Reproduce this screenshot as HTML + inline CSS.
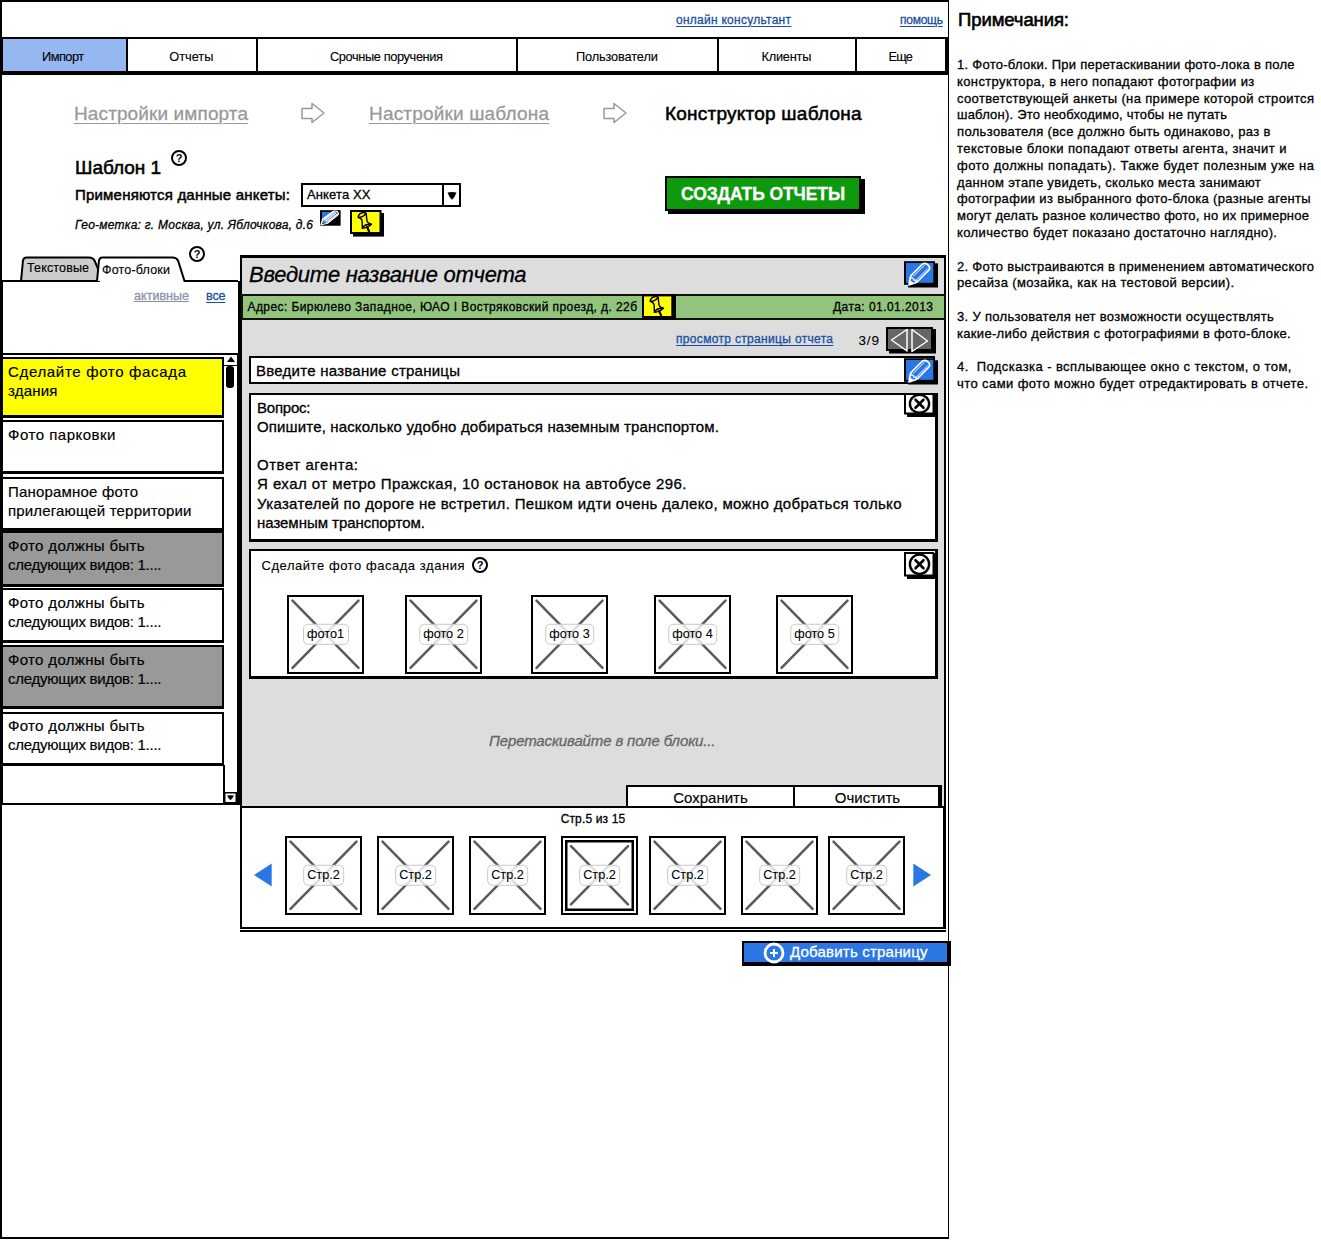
<!DOCTYPE html>
<html lang="ru"><head><meta charset="utf-8"><title>Конструктор шаблона</title>
<style>
*{box-sizing:border-box;margin:0;padding:0}
html,body{width:1321px;height:1241px;background:#fff;overflow:hidden}
body{font-family:"Liberation Sans","DejaVu Sans",sans-serif;color:#000;position:relative;font-size:13px;-webkit-text-stroke:0.300px currentColor}
.a{position:absolute}
.b{position:absolute;border:2px solid #000;background:#fff}
.t{position:absolute;white-space:nowrap;line-height:1}
.lnk{color:#1a4fa0;text-decoration:underline;text-decoration-thickness:1px;text-underline-offset:2px}
.bc{text-decoration:underline;text-decoration-thickness:1px;text-underline-offset:3px}
svg{position:absolute;overflow:visible}

.mi{font-size:12.800px;-webkit-text-stroke:0.120px;margin-left:-0.700px}
.li{position:absolute;left:0.500px;width:223px;border:2px solid #000;border-bottom-width:3px;background:#fff;font-size:15px;line-height:19px;padding:4px 0 0 5.500px;white-space:nowrap;-webkit-text-stroke:0.180px}
.ph{position:absolute;width:77px;height:78.500px;border:2px solid #000;background:#fff}
.ph svg{left:0;top:0;width:100%;height:100%}
.ph span{position:absolute;left:50%;top:50%;transform:translate(-50%,-50%);background:rgba(255,255,255,.8);border:1px solid #c8c8c8;border-radius:5px;padding:1.500px 3.500px 3px;font-size:12.700px;line-height:14px;white-space:nowrap;-webkit-text-stroke:0.080px}
.ph.sel{box-shadow:inset 0 0 0 2px #fff, inset 0 0 0 4.500px #000}
</style></head><body>
<!-- outer frame -->
<div class="a" style="left:0;top:0;width:949px;height:1239.300px;border:2px solid #000;border-right-width:1.5px;border-left-width:2.5px"></div>

<!-- top links -->
<div class="t lnk" style="letter-spacing:0.262px;left:676px;top:13.5px;font-size:12px">онлайн консультант</div>
<div class="t lnk" style="letter-spacing:-0.247px;left:900px;top:13.5px;font-size:12px">помощь</div>

<!-- menu bar -->
<div class="a" style="left:1px;top:37px;width:947.500px;height:38px;border:2px solid #000;border-bottom-width:4px;border-right-width:4px;background:#fff"></div>
<div class="a" style="left:2.500px;top:39px;width:124px;height:32px;background:#95b8f0"></div>
<div class="a" style="left:126px;top:39px;width:2px;height:32px;background:#000"></div>
<div class="a" style="left:256px;top:39px;width:2px;height:32px;background:#000"></div>
<div class="a" style="left:516px;top:39px;width:2px;height:32px;background:#000"></div>
<div class="a" style="left:717px;top:39px;width:2px;height:32px;background:#000"></div>
<div class="a" style="left:855px;top:39px;width:2px;height:32px;background:#000"></div>
<div class="t mi" style="left:1.500px;width:124px;top:50.500px;text-align:center"><span style="letter-spacing:-0.55px">Импорт</span></div>
<div class="t mi" style="left:128px;width:128px;top:50.500px;text-align:center"><span style="letter-spacing:-0.047px">Отчеты</span></div>
<div class="t mi" style="left:258px;width:258px;top:50.500px;text-align:center"><span style="letter-spacing:-0.385px">Срочные поручения</span></div>
<div class="t mi" style="left:518px;width:199px;top:50.500px;text-align:center"><span style="letter-spacing:-0.139px">Пользователи</span></div>
<div class="t mi" style="left:719px;width:136px;top:50.500px;text-align:center"><span style="letter-spacing:-0.219px">Клиенты</span></div>
<div class="t mi" style="left:857px;width:88px;top:50.500px;text-align:center"><span style="letter-spacing:-0.773px">Еще</span></div>

<!-- breadcrumbs -->
<div class="t bc" style="letter-spacing:0.113px;left:74px;top:104px;font-size:19px;color:#999">Настройки импорта</div>
<div class="t bc" style="letter-spacing:0.174px;left:369px;top:104px;font-size:19px;color:#999">Настройки шаблона</div>
<div class="t" style="letter-spacing:0.229px;left:665px;top:104px;font-size:19px;color:#000;-webkit-text-stroke:0.550px">Конструктор шаблона</div>

<!-- template header -->
<div class="t" style="letter-spacing:-0.031px;left:75px;top:158px;font-size:19px;-webkit-text-stroke:0.550px">Шаблон 1</div>
<div class="t" style="letter-spacing:0.202px;left:75px;top:187px;font-size:15px;-webkit-text-stroke:0.500px">Применяются данные анкеты:</div>
<div class="b" style="left:301px;top:183px;width:160px;height:24px"></div>
<div class="a" style="left:442px;top:185px;width:2px;height:20px;background:#000"></div>
<div class="t" style="letter-spacing:0.127px;left:307px;top:188px;font-size:13px">Анкета XX</div>
<div class="t" style="letter-spacing:0.236px;left:75px;top:219px;font-size:12px;font-style:italic">Гео-метка: г. Москва, ул. Яблочкова, д.6</div>

<!-- green button -->
<div class="a" style="left:668px;top:179px;width:196.500px;height:35px;background:#000"></div><div class="a" style="left:665px;top:175.500px;width:196px;height:35.500px;background:#0d9a0d;border:2px solid #000"></div>
<div class="t" style="left:666px;width:194px;top:185.500px;text-align:center;font-size:17.500px;font-weight:bold;color:#fff"><span style="letter-spacing:-0.095px">СОЗДАТЬ ОТЧЕТЫ</span></div>


<!-- left tabs -->
<svg style="left:0;top:250px" width="245" height="36" viewBox="0 250 245 36">
 <path d="M21 281 L23 260.500 Q23.500 257.500 26.500 257.500 L89 257.500 Q93 257.500 94.500 260.500 L99 271 L99 281 Z" fill="#ccc" stroke="#000" stroke-width="2"/>
 <path d="M2 281 L97 281 L99 260.500 Q99.500 257.500 102.500 257.500 L172.500 257.500 Q176.500 257.500 178 260.500 L184.500 281 L238 281" fill="#fff" stroke="#000" stroke-width="2"/>
</svg>
<div class="t" style="letter-spacing:0.143px;left:27px;top:262px;font-size:12.500px;-webkit-text-stroke:0.150px">Текстовые</div>
<div class="t" style="letter-spacing:0.186px;left:102px;top:263.500px;font-size:12.500px;-webkit-text-stroke:0.150px">Фото-блоки</div>
<!-- left panel -->
<div class="a" style="left:1px;top:281px;width:238.500px;height:74px;border:2px solid #000;border-top:none;border-right-width:2.500px"></div>
<div class="t" style="letter-spacing:0.036px;left:134px;top:290px;font-size:12.500px;color:#8a93a8;text-decoration:underline">активные</div>
<div class="t lnk" style="letter-spacing:-0.102px;left:206px;top:290px;font-size:12.500px">все</div>
<!-- list -->
<div class="a" style="left:1px;top:353px;width:238.500px;height:452.300px;border:2px solid #000;border-top:none;border-bottom-width:2.600px;border-right-width:3px"></div>
<div class="a" style="left:222.500px;top:765px;width:2px;height:38px;background:#000"></div>
<div class="a" style="left:224px;top:364.500px;width:13px;height:1.500px;background:#000"></div>
<div class="li" style="top:356.500px;height:61.500px;background:#ffff00;padding-top:3.500px"><span style="letter-spacing:0.668px">Сделайте фото фасада</span><br><span style="letter-spacing:0.212px">здания</span></div>
<div class="li" style="top:420px;height:54px;padding-top:3px"><span style="letter-spacing:0.507px">Фото парковки</span></div>
<div class="li" style="top:477px;height:54px;padding-top:3px"><span style="letter-spacing:0.194px">Панорамное фото</span><br><span style="letter-spacing:0.167px">прилегающей территории</span></div>
<div class="li" style="top:531px;height:55.500px;background:#999;padding-top:3px"><span style="letter-spacing:0.334px">Фото должны быть</span><br><span style="letter-spacing:-0.258px">следующих видов: 1....</span></div>
<div class="li" style="top:588px;height:54.500px;padding-top:3px"><span style="letter-spacing:0.334px">Фото должны быть</span><br><span style="letter-spacing:-0.258px">следующих видов: 1....</span></div>
<div class="li" style="top:645px;height:64px;background:#999;padding-top:2.500px"><span style="letter-spacing:0.334px">Фото должны быть</span><br><span style="letter-spacing:-0.258px">следующих видов: 1....</span></div>
<div class="li" style="top:711.500px;height:54px;padding-top:2.500px"><span style="letter-spacing:0.334px">Фото должны быть</span><br><span style="letter-spacing:-0.258px">следующих видов: 1....</span></div>
<!-- scrollbar -->
<div class="a" style="left:226px;top:366px;width:8px;height:22px;background:#000;border-radius:3px"></div>
<svg style="left:224px;top:355px" width="14" height="8" viewBox="0 0 14 8"><path d="M3 7 L7 1.500 L11 7 Z" fill="#000"/></svg>
<svg style="left:223.500px;top:792px" width="13" height="11" viewBox="0 0 13 11"><rect x="0.750" y="0.750" width="11.500" height="10" fill="#fff" stroke="#000" stroke-width="1.500"/><path d="M3 3.500 Q6.500 2.800 10 3.500 Q8.500 6.500 6.500 8.300 Q4.500 6.500 3 3.500 Z" fill="#000"/></svg>

<!-- main panel -->
<div class="a" style="left:240px;top:255px;width:706px;height:555px;background:#ddd;border:3px solid #000;border-right-width:2.500px;border-left-width:2.500px"></div>
<div class="t" style="letter-spacing:-0.25px;left:249px;top:263.500px;font-size:22px;font-style:italic">Введите название отчета</div>
<div class="a" style="left:241px;top:294px;width:705px;height:26px;background:#93c47d;border:2px solid #0c1408"></div>
<div class="t" style="letter-spacing:0.415px;left:247.500px;top:301px;font-size:12px">Адрес: Бирюлево Западное, ЮАО I Востряковский проезд, д. 22б</div>
<div class="t" style="letter-spacing:0.446px;left:833px;top:301px;font-size:12px">Дата: 01.01.2013</div>
<div class="t lnk" style="letter-spacing:0.327px;left:676px;top:333px;font-size:12px">просмотр страницы отчета</div>
<div class="t" style="letter-spacing:0.859px;left:858.500px;top:333.500px;font-size:13.500px;-webkit-text-stroke:0.100px">3/9</div>

<div class="b" style="left:249px;top:356px;width:686px;height:28px"></div>
<div class="t" style="letter-spacing:0.254px;left:256px;top:363px;font-size:15px">Введите название страницы</div>

<div class="b" style="left:249px;top:393px;width:689px;height:149px;border-bottom-width:3px;border-right-width:3px"></div>
<div class="a" style="left:257px;top:397.500px;font-size:15px;line-height:19.200px;white-space:nowrap"><span style="letter-spacing:-0.221px">Вопрос:</span><br><span style="letter-spacing:0.145px">Опишите, насколько удобно добираться наземным транспортом.</span><br><br><span style="letter-spacing:0.538px">Ответ агента:</span><br><span style="letter-spacing:0.452px">Я ехал от метро Пражская, 10 остановок на автобусе 296.</span><br><span style="letter-spacing:0.327px">Указателей по дороге не встретил. Пешком идти очень далеко, можно добраться только</span><br><span style="letter-spacing:-0.036px">наземным транспортом.</span></div>

<div class="b" style="left:249px;top:549px;width:689px;height:130px;border-bottom-width:3px;border-right-width:3px"></div>
<div class="t" style="letter-spacing:0.544px;left:261.500px;top:559px;font-size:13px;-webkit-text-stroke:0.120px">Сделайте фото фасада здания</div>

<div class="ph" style="left:287px;top:595px"><svg viewBox="0 0 73 74" preserveAspectRatio="none"><path d="M3.500 3.500 L69.500 70.500 M69.500 3.500 L3.500 70.500" stroke="#5a5a5a" stroke-width="2.500" stroke-linecap="round" fill="none"/></svg><span>фото1</span></div>
<div class="ph" style="left:405px;top:595px"><svg viewBox="0 0 73 74" preserveAspectRatio="none"><path d="M3.500 3.500 L69.500 70.500 M69.500 3.500 L3.500 70.500" stroke="#5a5a5a" stroke-width="2.500" stroke-linecap="round" fill="none"/></svg><span>фото 2</span></div>
<div class="ph" style="left:531px;top:595px"><svg viewBox="0 0 73 74" preserveAspectRatio="none"><path d="M3.500 3.500 L69.500 70.500 M69.500 3.500 L3.500 70.500" stroke="#5a5a5a" stroke-width="2.500" stroke-linecap="round" fill="none"/></svg><span>фото 3</span></div>
<div class="ph" style="left:654px;top:595px"><svg viewBox="0 0 73 74" preserveAspectRatio="none"><path d="M3.500 3.500 L69.500 70.500 M69.500 3.500 L3.500 70.500" stroke="#5a5a5a" stroke-width="2.500" stroke-linecap="round" fill="none"/></svg><span>фото 4</span></div>
<div class="ph" style="left:776px;top:595px"><svg viewBox="0 0 73 74" preserveAspectRatio="none"><path d="M3.500 3.500 L69.500 70.500 M69.500 3.500 L3.500 70.500" stroke="#5a5a5a" stroke-width="2.500" stroke-linecap="round" fill="none"/></svg><span>фото 5</span></div>

<div class="t" style="letter-spacing:-0.141px;left:489px;top:733px;font-size:15px;font-style:italic;color:#666">Перетаскивайте в поле блоки...</div>

<!-- save/clear -->
<div class="a" style="left:626px;top:785px;width:316px;height:24px;background:#fff;border:2px solid #000;border-right-width:4px;border-bottom:none"></div>
<div class="a" style="left:793px;top:787px;width:2px;height:22px;background:#000"></div>
<div class="t" style="left:628px;width:165px;top:789.500px;text-align:center;font-size:15px;-webkit-text-stroke:0.150px">Сохранить</div>
<div class="t" style="left:795px;width:145px;top:789.500px;text-align:center;font-size:15px;-webkit-text-stroke:0.150px">Очистить</div>

<!-- bottom strip -->
<div class="a" style="left:240px;top:806.300px;width:705.500px;height:122.800px;background:#fff;border:2px solid #000;border-left-width:2.700px;border-bottom-width:2.800px;border-right-width:3.500px"></div>
<div class="a" style="left:240px;top:930px;width:706px;height:2.200px;background:#000"></div>
<div class="t" style="left:543px;width:100px;top:813px;text-align:center;font-size:12px"><span style="letter-spacing:0.142px">Стр.5 из 15</span></div>
<div class="ph" style="left:285px;top:836px"><svg viewBox="0 0 73 74" preserveAspectRatio="none"><path d="M3.500 3.500 L69.500 70.500 M69.500 3.500 L3.500 70.500" stroke="#5a5a5a" stroke-width="2.500" stroke-linecap="round" fill="none"/></svg><span>Стр.2</span></div>
<div class="ph" style="left:377px;top:836px"><svg viewBox="0 0 73 74" preserveAspectRatio="none"><path d="M3.500 3.500 L69.500 70.500 M69.500 3.500 L3.500 70.500" stroke="#5a5a5a" stroke-width="2.500" stroke-linecap="round" fill="none"/></svg><span>Стр.2</span></div>
<div class="ph" style="left:469px;top:836px"><svg viewBox="0 0 73 74" preserveAspectRatio="none"><path d="M3.500 3.500 L69.500 70.500 M69.500 3.500 L3.500 70.500" stroke="#5a5a5a" stroke-width="2.500" stroke-linecap="round" fill="none"/></svg><span>Стр.2</span></div>
<div class="ph sel" style="left:561px;top:836px"><svg viewBox="0 0 73 74" preserveAspectRatio="none"><path d="M8 8 L65 66 M65 8 L8 66" stroke="#5a5a5a" stroke-width="2.500" stroke-linecap="round" fill="none"/></svg><span>Стр.2</span></div>
<div class="ph" style="left:649px;top:836px"><svg viewBox="0 0 73 74" preserveAspectRatio="none"><path d="M3.500 3.500 L69.500 70.500 M69.500 3.500 L3.500 70.500" stroke="#5a5a5a" stroke-width="2.500" stroke-linecap="round" fill="none"/></svg><span>Стр.2</span></div>
<div class="ph" style="left:741px;top:836px"><svg viewBox="0 0 73 74" preserveAspectRatio="none"><path d="M3.500 3.500 L69.500 70.500 M69.500 3.500 L3.500 70.500" stroke="#5a5a5a" stroke-width="2.500" stroke-linecap="round" fill="none"/></svg><span>Стр.2</span></div>
<div class="ph" style="left:828px;top:836px"><svg viewBox="0 0 73 74" preserveAspectRatio="none"><path d="M3.500 3.500 L69.500 70.500 M69.500 3.500 L3.500 70.500" stroke="#5a5a5a" stroke-width="2.500" stroke-linecap="round" fill="none"/></svg><span>Стр.2</span></div>
<svg style="left:254px;top:863px" width="18" height="24" viewBox="0 0 18 24"><path d="M17.700 0.500 L17.700 23.500 L0 12 Z" fill="#2b78e4"/></svg>
<svg style="left:913px;top:863px" width="18" height="24" viewBox="0 0 18 24"><path d="M0.300 0.500 L0.300 23.500 L18 12 Z" fill="#2b78e4"/></svg>

<!-- add page button -->
<div class="a" style="left:742px;top:940.500px;width:208.500px;height:25px;background:#2b78e4;border:2px solid #000;border-right-width:4px;border-bottom-width:4.500px"></div>
<div class="t" style="letter-spacing:0.201px;left:790px;top:944px;font-size:15px;color:#fff">Добавить страницу</div>

<!-- icons -->
<svg style="left:170px;top:149px" width="18" height="18" viewBox="0 0 18 18"><circle cx="9" cy="9" r="7" fill="#fff" stroke="#000" stroke-width="2"/><text x="9" y="13" text-anchor="middle" font-family="Liberation Sans, sans-serif" font-size="11" font-weight="bold" fill="#000">?</text></svg><svg style="left:188px;top:245px" width="18" height="18" viewBox="0 0 18 18"><circle cx="9" cy="9" r="7" fill="#fff" stroke="#000" stroke-width="2"/><text x="9" y="13" text-anchor="middle" font-family="Liberation Sans, sans-serif" font-size="11" font-weight="bold" fill="#000">?</text></svg><svg style="left:471px;top:556px" width="18" height="18" viewBox="0 0 18 18"><circle cx="9" cy="9" r="7" fill="#fff" stroke="#000" stroke-width="2"/><text x="9" y="13" text-anchor="middle" font-family="Liberation Sans, sans-serif" font-size="11" font-weight="bold" fill="#000">?</text></svg>
<svg style="left:904px;top:261px" width="34" height="27" viewBox="0 0 34 27">
<rect x="4" y="2.300" width="30" height="24.200" fill="#000"/><rect x="0" y="0.200" width="31" height="23.600" fill="#000"/><rect x="2" y="2" width="27.300" height="19.800" fill="#2b78e4"/>
<g fill="none" stroke="#fff" stroke-linecap="round" stroke-linejoin="round">
<path stroke-width="1.700" d="M5 24 L6.300 16 Q7 14.500 8.500 13 L18.500 3 Q21 1.300 23.500 3.500 L25 5 Q26.500 7.500 24.500 9.500 L14 20 Q12.500 21.300 11 22 Z"/>
<path stroke-width="1.300" d="M7.300 17 Q9.500 16.500 9.800 19 Q12 18.800 12.500 20.800"/>
<path stroke-width="0.900" stroke-dasharray="1.300 0.500" d="M9.500 15 L20.300 4.300 M12.300 19 L23.300 8.200"/>
</g><path d="M5 24.200 L6 19.500 L10.300 22.300 Z" fill="#fff"/></svg><svg style="left:904px;top:358px" width="34" height="27" viewBox="0 0 34 27">
<rect x="4" y="2.300" width="30" height="24.200" fill="#000"/><rect x="0" y="0.200" width="31" height="23.600" fill="#000"/><rect x="2" y="2" width="27.300" height="19.800" fill="#2b78e4"/>
<g fill="none" stroke="#fff" stroke-linecap="round" stroke-linejoin="round">
<path stroke-width="1.700" d="M5 24 L6.300 16 Q7 14.500 8.500 13 L18.500 3 Q21 1.300 23.500 3.500 L25 5 Q26.500 7.500 24.500 9.500 L14 20 Q12.500 21.300 11 22 Z"/>
<path stroke-width="1.300" d="M7.300 17 Q9.500 16.500 9.800 19 Q12 18.800 12.500 20.800"/>
<path stroke-width="0.900" stroke-dasharray="1.300 0.500" d="M9.500 15 L20.300 4.300 M12.300 19 L23.300 8.200"/>
</g><path d="M5 24.200 L6 19.500 L10.300 22.300 Z" fill="#fff"/></svg>
<svg style="left:904px;top:393px" width="34" height="24" viewBox="0 0 34 24">
<rect x="3" y="1" width="30.500" height="23" fill="#000"/><rect x="0" y="0" width="30" height="21.5" fill="#000"/><rect x="2" y="2" width="26.500" height="17.5" fill="#fff"/>
<ellipse cx="15.500" cy="10.75" rx="9.600" ry="9.05" fill="#fff" stroke="#000" stroke-width="2.400"/>
<path d="M11.500 6.75 L19.500 14.75 M19.500 6.75 L11.500 14.75" stroke="#000" stroke-width="2.600" stroke-linecap="round"/></svg><svg style="left:904px;top:552px" width="34" height="27" viewBox="0 0 34 27">
<rect x="3" y="1" width="30.500" height="26" fill="#000"/><rect x="0" y="0" width="30" height="24.5" fill="#000"/><rect x="2" y="2" width="26.500" height="20.5" fill="#fff"/>
<ellipse cx="15.500" cy="12.25" rx="9.600" ry="9.6" fill="#fff" stroke="#000" stroke-width="2.400"/>
<path d="M11.500 8.25 L19.500 16.25 M19.500 8.25 L11.500 16.25" stroke="#000" stroke-width="2.600" stroke-linecap="round"/></svg>
<svg style="left:350px;top:210px" width="34" height="27" viewBox="0 0 34 27">
<rect x="3" y="3" width="31" height="23.600" fill="#000"/><rect x="0" y="0" width="31.500" height="24" fill="#000"/><rect x="2" y="2" width="27.500" height="20" fill="#ffff00"/>
<g fill="#ffff00" stroke="#000" stroke-width="1.400" stroke-linejoin="round" stroke-linecap="round">
<path d="M8.300 7.300 Q11.600 8.300 12.100 10.600 L12.400 18.200 Q17.500 18.300 21.400 14.300 Q17.300 13 16.900 10.400 L16.200 3.500 Q14.500 1.600 11 3.200 Q8 5 8.300 7.300 Z"/>
<path d="M8.300 7.300 Q12.500 7.800 16.300 3.500" fill="none"/>
<path d="M12.400 18.200 Q14.500 13.800 21.400 14.300" fill="none"/>
</g><path d="M17.200 17 L19 21.300" stroke="#000" stroke-width="2.200" stroke-linecap="round"/></svg>
<svg style="left:642px;top:294px" width="34" height="26" viewBox="0 0 34 26">
<rect x="0" y="0" width="34" height="26" fill="#000"/><rect x="2" y="2.400" width="27.300" height="19.600" fill="#ffff00"/>
<g fill="#ffff00" stroke="#000" stroke-width="1.400" stroke-linejoin="round" stroke-linecap="round">
<path d="M8.300 7.300 Q11.600 8.300 12.100 10.600 L12.400 18.200 Q17.500 18.300 21.400 14.300 Q17.300 13 16.900 10.400 L16.200 3.500 Q14.500 1.600 11 3.200 Q8 5 8.300 7.300 Z"/>
<path d="M8.300 7.300 Q12.500 7.800 16.300 3.500" fill="none"/>
<path d="M12.400 18.200 Q14.500 13.800 21.400 14.300" fill="none"/>
</g><path d="M17.200 17 L19 21.300" stroke="#000" stroke-width="2.200" stroke-linecap="round"/></svg>
<svg style="left:320px;top:210px" width="21" height="16" viewBox="0 0 21 16">
<rect x="0" y="0.200" width="20.600" height="15.500" fill="#000"/><path d="M2 2 L16.500 2 L17.500 4.500 L7 13 L2 13 Z" fill="#2b78e4"/>
<g transform="matrix(0.833 0 0 0.651 -2.750 -0.830)" fill="none" stroke="#fff" stroke-width="1.700" stroke-linecap="round" stroke-linejoin="round">
<path d="M4.500 24 L6.500 15.500 L19 3.500 Q21.500 1.800 24 4 Q26.500 6.500 24.500 9 L12.500 21.500 Z"/>
<path d="M9.500 18.500 L22 6"/><path d="M8 16.500 L20.500 4.200"/><path d="M11.500 20 L24 8"/>
</g></svg>
<svg style="left:301px;top:102px" width="25" height="22" viewBox="0 0 25 22"><path d="M1 6.500 L11 6.500 L11 1.500 L23 11 L11 20.500 L11 16.500 L1 16.500 Z" fill="#fff" stroke="#999" stroke-width="1.500" stroke-linejoin="round"/></svg><svg style="left:602.500px;top:102px" width="25" height="22" viewBox="0 0 25 22"><path d="M1 6.500 L11 6.500 L11 1.500 L23 11 L11 20.500 L11 16.500 L1 16.500 Z" fill="#fff" stroke="#999" stroke-width="1.500" stroke-linejoin="round"/></svg>
<svg style="left:446px;top:191px" width="12" height="10" viewBox="0 0 12 10"><path d="M1.500 1.500 Q6 0.500 10.500 1.500 Q9 6 6 8.800 Q3 6 1.500 1.500 Z" fill="#000"/></svg>
<svg style="left:886px;top:327px" width="50" height="27" viewBox="0 0 50 27">
<rect x="3" y="2" width="47" height="24.500" fill="#000"/><rect x="0" y="0" width="47" height="24" fill="#000"/><rect x="2" y="2" width="43" height="20" fill="#666"/>
<path d="M21 2.500 L5.500 13 L21 24 Z M26 2.500 L41.500 14 L26 24.500 Z" fill="#666" stroke="#fff" stroke-width="1.500" stroke-linejoin="round"/></svg>
<svg style="left:763px;top:942px" width="22" height="22" viewBox="0 0 22 22"><circle cx="11" cy="11" r="9" fill="none" stroke="#fff" stroke-width="2.800"/><circle cx="11" cy="11" r="5.800" fill="#2b78e4" stroke="none"/><path d="M11 7 L11 15 M7 11 L15 11" stroke="#fff" stroke-width="2"/></svg>

<!-- notes -->
<div class="t" style="letter-spacing:-0.095px;left:958px;top:11px;font-size:18.500px;-webkit-text-stroke:0.600px">Примечания:</div>
<div class="a" id="notes" style="left:957px;top:57px;width:364px;font-size:13px;line-height:16.8px;white-space:nowrap"><span style="letter-spacing:0.271px">1. Фото-блоки. При перетаскивании фото-лока в поле</span><br><span style="letter-spacing:0.379px">конструктора, в него попадают фотографии из</span><br><span style="letter-spacing:0.362px">соответствующей анкеты (на примере которой строится</span><br><span style="letter-spacing:0.214px">шаблон). Это необходимо, чтобы не путать</span><br><span style="letter-spacing:0.351px">пользователя (все должно быть одинаково, раз в</span><br><span style="letter-spacing:0.437px">текстовые блоки попадают ответы агента, значит и</span><br><span style="letter-spacing:0.475px">фото должны попадать). Также будет полезным уже на</span><br><span style="letter-spacing:0.319px">данном этапе увидеть, сколько места занимают</span><br><span style="letter-spacing:0.329px">фотографии из выбранного фото-блока (разные агенты</span><br><span style="letter-spacing:0.249px">могут делать разное количество фото, но их примерное</span><br><span style="letter-spacing:0.381px">количество будет показано достаточно наглядно).</span><br><br><span style="letter-spacing:0.283px">2. Фото выстраиваются в применением автоматического</span><br><span style="letter-spacing:0.375px">ресайза (мозайка, как на тестовой версии).</span><br><br><span style="letter-spacing:0.316px">3. У пользователя нет возможности осуществлять</span><br><span style="letter-spacing:0.312px">какие-либо действия с фотографиями в фото-блоке.</span><br><br><span style="letter-spacing:0.419px">4.&nbsp; Подсказка - всплывающее окно с текстом, о том,</span><br><span style="letter-spacing:0.415px">что сами фото можно будет отредактировать в отчете.</span></div>

</body></html>
